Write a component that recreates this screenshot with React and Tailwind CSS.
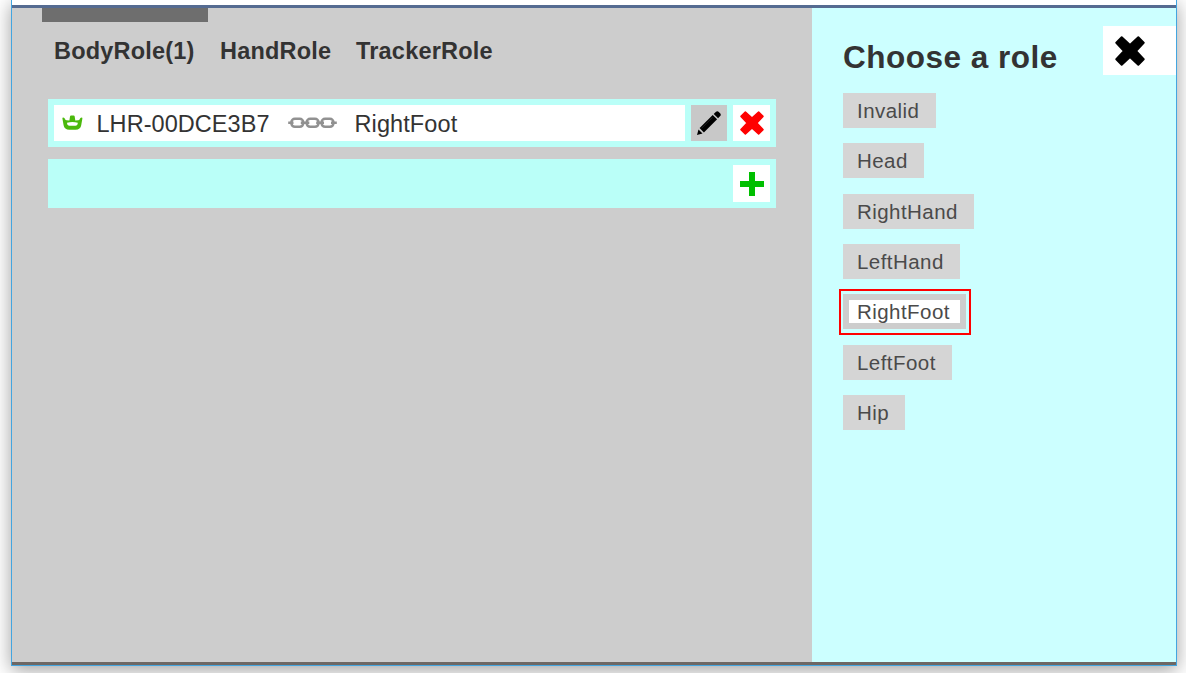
import React from "react";

const roles = [
  { name: "Invalid", width: "w-[93px]" },
  { name: "Head", width: "w-[81px]" },
  { name: "RightHand", width: "w-[131px]" },
  { name: "LeftHand", width: "w-[117px]" },
  { name: "RightFoot", width: "w-[123px]", selected: true },
  { name: "LeftFoot", width: "w-[109px]" },
  { name: "Hip", width: "w-[62px]" },
];

function Cross({ className }) {
  return (
    <svg viewBox="0 0 30 30" className={className} fill="currentColor">
      <path d="M6.7 1.3 L15 9 L23.3 1.3 L28.7 6.7 L21 15 L28.7 23.3 L23.3 28.7 L15 21 L6.7 28.7 L1.3 23.3 L9 15 L1.3 6.7 Z" stroke="currentColor" strokeWidth="2" strokeLinejoin="round" />
    </svg>
  );
}

function Pencil() {
  return (
    <svg viewBox="0 0 24 24" className="h-6 w-6">
      <path d="M0 24 L1.5 18.5 L5.5 22.5 Z" fill="#000" />
      <path d="M2.6 17.1 L15.7 3.9 L20.1 8.3 L6.9 21.4 Z" fill="#000" />
      <path d="M16.7 2.9 L19 0.8 Q20.4 -0.3 21.8 1 L23.1 2.3 Q24.4 3.7 23.2 5.1 L21.1 7.3 Z" fill="#000" />
      <path d="M4.5 17.3 L15.5 6.3" stroke="#444" strokeWidth="0.5" />
    </svg>
  );
}

function Tracker() {
  return (
    <svg viewBox="0 0 21 16" className="-mt-px h-4 w-[21px]">
      <path fillRule="evenodd" fill="#4bb90c" d="M0.4 3.6 Q0.2 2.5 1.3 2.5 Q2.6 2.5 3 4 Q3.4 5.2 4.6 5.3 L7.4 5.6 L8 1.5 Q8.2 0.5 9 0.5 H11.6 Q12.5 0.5 12.7 1.5 L13.3 5.6 L16.2 5.3 Q17.4 5.2 17.8 4 Q18.2 2.5 19.5 2.5 Q20.6 2.5 20.4 3.6 L19.2 10.2 Q18.5 14.5 13.5 14.7 H7.3 Q2.4 14.5 1.6 10.2 Z M5 7.7 Q5.1 10.6 7.5 10.7 H13.4 Q15.7 10.6 15.8 7.7 Q13 7 10.4 7 Q7.8 7 5 7.7 Z" />
    </svg>
  );
}

function Chain() {
  return (
    <svg viewBox="0 0 50 12" className="h-3 w-[50px]" fill="none" stroke="#919191">
      <g strokeWidth="2.6">
        <rect x="3.4" y="1.8" width="11.8" height="8" rx="3.5" />
        <rect x="18.7" y="1.8" width="11.8" height="8" rx="3.5" />
        <rect x="33.6" y="1.8" width="11.8" height="8" rx="3.5" />
      </g>
      <path d="M0.2 5.8 H5.5 M12.8 5.8 H21.3 M28.2 5.8 H36 M43 5.8 H48.8" strokeWidth="2.4" />
    </svg>
  );
}

function TabList() {
  return (
    <nav className="mt-3 flex h-[34px] text-[23.5px] leading-[34px] font-bold tracking-[0.2px]">
      <button className="ml-[42px] w-[166px] text-left">BodyRole(1)</button>
      <button className="w-[136px] text-left">HandRole</button>
      <button className="text-left">TrackerRole</button>
    </nav>
  );
}

export default function App() {
  return (
    <div className="h-[673px] w-[1186px] overflow-hidden bg-white pl-[11px] font-['Liberation_Sans',Arial,sans-serif] text-[#333]">
      <div className="flex h-[666px] w-[1166px] flex-col border-x border-b border-[#43a5e0] bg-white shadow-[0_4px_18px_rgba(0,0,0,0.38)]">
        <div className="h-2 shrink-0 border-b-[3px] border-[#556b91]" />
        <div className="flex h-[654px] shrink-0">
          <main className="w-[800px] bg-[#cdcdcd]">
            <div className="ml-[30px] h-3.5 w-[166px] bg-[#6e6e6e]" />
            <TabList />
            <section className="mt-[31px] ml-9 w-[728px]">
              <div className="flex h-12 gap-1.5 bg-[#bafff8] p-1.5">
                <div className="flex h-9 w-[631px] items-center bg-white pl-2 text-[23.5px]">
                  <Tracker />
                  <span className="ml-[13.5px] w-[191.5px] pt-[3px] tracking-[0.05px] whitespace-nowrap">LHR-00DCE3B7</span>
                  <Chain />
                  <span className="ml-[16.5px] pt-[3px] tracking-[0.1px]">RightFoot</span>
                </div>
                <button className="flex h-9 w-9 items-center justify-center bg-[#c8c8c8]"><Pencil /></button>
                <button className="flex h-9 w-[37px] items-center justify-center bg-white text-[#ff0000]"><Cross className="h-6 w-6" /></button>
              </div>
              <div className="mt-3 flex h-[49px] justify-end bg-[#bafff8] p-1.5">
                <button className="flex h-[37px] w-[37px] items-center justify-center bg-white">
                  <svg viewBox="0 0 24 24" className="h-6 w-6"><path d="M9 0 H15 V9 H24 V15 H15 V24 H9 V15 H0 V9 H9 Z" fill="#00bf00" /></svg>
                </button>
              </div>
            </section>
          </main>
          <aside className="grow bg-[#ccffff] pl-[31px]">
            <div className="flex justify-between pt-[18px]">
              <h1 className="pt-[13px] text-[31.5px] leading-9 font-bold tracking-[0.5px] whitespace-nowrap">Choose a role</h1>
              <button className="h-[49px] w-[73px] bg-white pl-3 text-black"><Cross className="h-[30px] w-[30px]" /></button>
            </div>
            <div className="mt-[18px] flex flex-col items-start gap-[15.34px] text-[20.5px] leading-9 tracking-[0.45px] text-[#4a4a4a]">
              {roles.map((r) => r.selected ? (
                <button key={r.name} className={r.width + " relative h-[35px] border-6 border-[#cdcdcd] bg-white pl-2 text-left leading-6"}>
                  {r.name}
                  <span className="absolute -top-[11px] -left-[10px] h-[46px] w-[132px] border-2 border-[#ff0000]" />
                </button>
              ) : (
                <button key={r.name} className={r.width + " h-[35px] bg-[#d5d5d5] pl-3.5 text-left"}>{r.name}</button>
              ))}
            </div>
          </aside>
        </div>
        <div className="h-[3px] shrink-0 bg-[#6d6764]" />
      </div>
    </div>
  );
}
